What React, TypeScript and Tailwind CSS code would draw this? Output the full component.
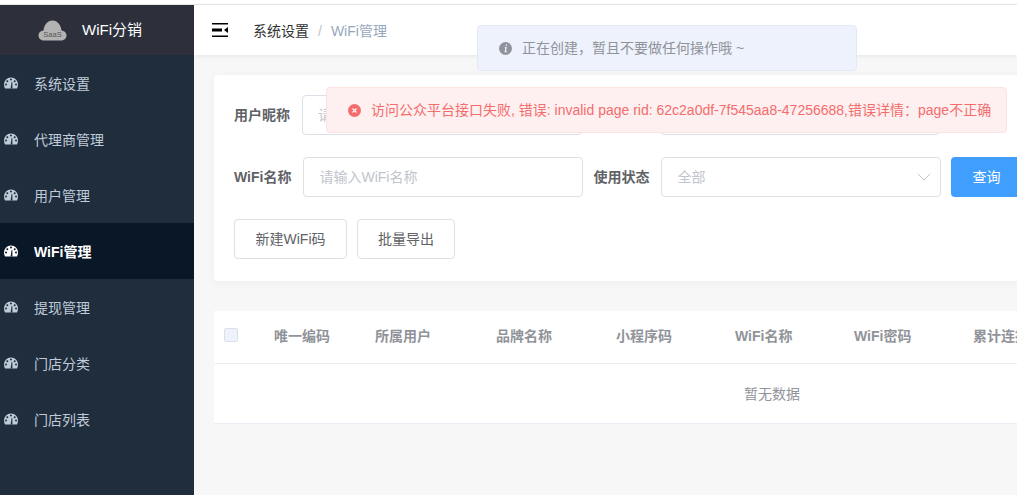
import { ChevronDown } from "lucide-react";

const FONT = "font-['Liberation_Sans','Noto_Sans_CJK_SC',sans-serif]";

const menuItems = ["系统设置", "代理商管理", "用户管理", "WiFi管理", "提现管理", "门店分类", "门店列表"];
const activeItem = "WiFi管理";

const GaugeIcon = ({ color, bg }: { color: string; bg: string }) => (
  <svg width="14" height="12" viewBox="0 0 14 12" className="shrink-0">
    <path
      d="M7 0.4C3.1 0.4 0 3.6 0 7.5C0 9 0.4 10.4 1.1 11.6H12.9C13.6 10.4 14 9 14 7.5C14 3.6 10.9 0.4 7 0.4Z"
      fill={color}
    />
    <circle cx="7" cy="2.6" r="1" fill={bg} />
    <circle cx="3.3" cy="4.2" r="1" fill={bg} />
    <circle cx="10.7" cy="4.2" r="1" fill={bg} />
    <circle cx="2" cy="7.6" r="1" fill={bg} />
    <circle cx="12" cy="7.6" r="1" fill={bg} />
    <path d="M6.6 11.6L7.6 5H8.4L8.4 11.6Z" fill={bg} />
  </svg>
);

const Sidebar = () => (
  <aside className="w-[194px] shrink-0 bg-[#1f2d3d]">
    <div className="flex h-[50px] items-center bg-[#2d2f3a] pl-[38px]">
      <svg width="29" height="21" viewBox="0 0 29 21">
        <path
          d="M6 20.5C2.5 20.5 0.5 18 0.5 15.5C0.5 12.8 2.7 10.7 5.5 10.6C6 5 9.5 0.5 14.5 0.5C19.5 0.5 23 5 23.5 10.6C26.3 10.7 28.5 12.8 28.5 15.5C28.5 18 26.5 20.5 23 20.5Z"
          fill="#b3b3b3"
        />
        <text x="14.5" y="16.5" textAnchor="middle" fontSize="7.5" fill="#555" fontFamily="Liberation Sans">
          SaaS
        </text>
      </svg>
      <span className="ml-[15px] text-[15px] text-white">WiFi分销</span>
    </div>
    <nav>
      {menuItems.map((item) => {
        const active = item === activeItem;
        return (
          <div
            key={item}
            className={`flex h-[56px] items-center pl-[4px] text-[14px] ${
              active ? "bg-[#0a1726] font-bold text-white" : "text-[#bfcbd9]"
            }`}
          >
            <GaugeIcon color={active ? "#ffffff" : "#bfcbd9"} bg={active ? "#0a1726" : "#1f2d3d"} />
            <span className="ml-[16px] translate-y-px">{item}</span>
          </div>
        );
      })}
    </nav>
  </aside>
);

const Header = () => (
  <header className="flex h-[50px] items-center bg-white pl-[18px] shadow-[0_1px_4px_rgba(0,21,41,0.08)]">
    <svg width="16" height="14" viewBox="0 0 16 14" className="text-black">
      <path d="M0 0H16V1.5H0ZM0 5.6H10V8.4H0ZM0 12.5H16V14H0Z" fill="currentColor" />
      <path d="M16 4V10L12 7Z" fill="currentColor" />
    </svg>
    <div className="ml-[25px] flex translate-y-px items-center text-[14px]">
      <span className="text-[#303133]">系统设置</span>
      <span className="mx-[9px] text-[#c0c4cc]">/</span>
      <span className="text-[#97a8be]">WiFi管理</span>
    </div>
  </header>
);

const Field = ({ label, placeholder, select }: { label: string; placeholder: string; select?: boolean }) => (
  <div className="flex items-center">
    <span className="min-w-[68px] shrink-0 pr-[12px] text-[14px] font-bold whitespace-nowrap text-[#606266]">
      {label}
    </span>
    <div className="flex h-[40px] w-[280px] items-center justify-between rounded-[4px] border border-[#dcdfe6] bg-white pr-[4px] pl-[15px] text-[14px] text-[#c0c4cc]">
      <span>{placeholder}</span>
      {select && <ChevronDown className="h-[24px] w-[24px] text-[#c0c4cc]" strokeWidth={1} />}
    </div>
  </div>
);

const OutlineButton = ({ label, width }: { label: string; width: string }) => (
  <button className={`h-[40px] rounded-[4px] border border-[#dcdfe6] bg-white text-[14px] text-[#606266] ${width}`}>
    {label}
  </button>
);

const SearchCard = () => (
  <section className="w-[1116px] rounded-[4px] bg-white pt-[20px] pr-[20px] pb-[22px] pl-[20px] shadow-[0_2px_12px_rgba(0,0,0,0.04)]">
    <div className="flex items-center gap-[10px]">
      <Field label="用户昵称" placeholder="请输入用户昵称" />
      <Field label="" placeholder="" />
    </div>
    <div className="mt-[22px] flex items-center gap-[10px]">
      <Field label="WiFi名称" placeholder="请输入WiFi名称" />
      <Field label="使用状态" placeholder="全部" select />
      <button className="h-[40px] w-[70px] shrink-0 rounded-[4px] bg-[#409eff] text-[14px] text-white">查询</button>
    </div>
    <div className="mt-[22px] flex gap-[10px]">
      <OutlineButton label="新建WiFi码" width="w-[113px]" />
      <OutlineButton label="批量导出" width="w-[98px]" />
    </div>
  </section>
);

const columns: [string, string][] = [
  ["唯一编码", "w-[101px]"],
  ["所属用户", "w-[121px]"],
  ["品牌名称", "w-[120px]"],
  ["小程序码", "w-[119px]"],
  ["WiFi名称", "w-[119px]"],
  ["WiFi密码", "w-[119px]"],
  ["累计连接", "w-[119px]"],
];

const DataTable = () => (
  <section className="mt-[30px] w-[1116px] bg-white">
    <div className="flex h-[53px] items-center border-b border-[#ebeef5]">
      <div className="flex w-[60px] shrink-0 -translate-y-[2px] pl-[10px]">
        <span className="h-[14px] w-[14px] rounded-[2px] border border-[#dcdfe6] bg-[#edf2fc]" />
      </div>
      {columns.map(([title, width]) => (
        <span
          key={title}
          className={`shrink-0 -translate-y-px text-[14px] font-bold whitespace-nowrap text-[#909399] ${width}`}
        >
          {title}
        </span>
      ))}
    </div>
    <div className="flex h-[60px] items-center justify-center border-b border-[#ebeef5] pt-[2px] text-[14px] text-[#909399]">
      暂无数据
    </div>
  </section>
);

const Toasts = () => (
  <>
    <div className="absolute top-[25px] left-[477px] flex h-[46px] w-[380px] items-center rounded-[4px] border border-[#e4e9f7] bg-[#edf2fc] pl-[21px] text-[14px] text-[#909399]">
      <svg width="13" height="13" viewBox="0 0 13 13">
        <circle cx="6.5" cy="6.5" r="6.5" fill="#909399" />
        <path d="M7 2.6H8.2L7.9 4H6.7ZM6.4 5H7.8L7 9.2H7.9L7.7 10.2H5.5L6.3 6H5.6Z" fill="#edf2fc" />
      </svg>
      <span className="ml-[10px]">正在创建，暂且不要做任何操作哦 ~</span>
    </div>
    <div className="absolute top-[87px] left-[326px] flex h-[46px] w-[681px] items-center rounded-[4px] border border-[#fde2e2] bg-[#fef0f0] pl-[21px] text-[14px] text-[#f56c6c]">
      <svg width="13" height="13" viewBox="0 0 13 13">
        <circle cx="6.5" cy="6.5" r="6.5" fill="#f56c6c" />
        <path d="M4.5 4.5L8.5 8.5M8.5 4.5L4.5 8.5" stroke="#fef0f0" strokeWidth="1.3" />
      </svg>
      <span className="ml-[10px] whitespace-nowrap">
        访问公众平台接口失败, 错误: invalid page rid: 62c2a0df-7f545aa8-47256688,错误详情：page不正确
      </span>
    </div>
  </>
);

export default function App() {
  return (
    <div className={`relative h-[495px] w-[1017px] overflow-hidden bg-white ${FONT}`}>
      <div className="h-[5px] border-b border-[#e8e8e8] bg-white" />
      <div className="flex h-[490px]">
        <Sidebar />
        <main className="flex min-w-0 flex-1 flex-col bg-[#f7f7f7]">
          <Header />
          <div className="flex-1 overflow-hidden pt-[20px] pl-[20px]">
            <SearchCard />
            <DataTable />
          </div>
        </main>
      </div>
      <Toasts />
    </div>
  );
}
